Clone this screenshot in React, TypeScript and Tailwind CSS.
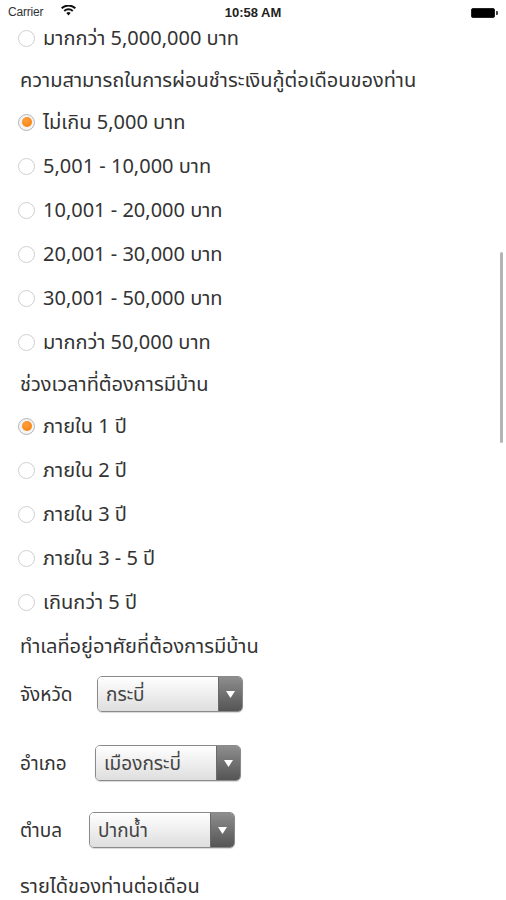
import React from "react";

const font = { fontFamily: '"Noto Sans", "Noto Sans Thai", "Loma", "Garuda", "Liberation Sans", sans-serif' };

function Radio({ checked, label }: { checked?: boolean; label: string }) {
  return (
    <div className="flex h-[44px] items-center pl-[18px]">
      <div
        className={
          "flex h-[17px] w-[17px] shrink-0 items-center justify-center rounded-full border " +
          (checked ? "border-[#b5b5b5] bg-[#f4f4f4]" : "border-[#cfcfcf] bg-white")
        }
      >
        {checked && (
          <div className="h-[10px] w-[10px] rounded-full bg-[radial-gradient(circle_at_40%_35%,#ffa040,#f47a00)]" />
        )}
      </div>
      <span className="ml-[8px] text-[20px] leading-none text-[#333333]">{label}</span>
    </div>
  );
}

function Heading({ text, h }: { text: string; h: string }) {
  return (
    <div className={"flex items-center pl-[20px] text-[20px] leading-none text-[#333333] " + h}>{text}</div>
  );
}

function Select({ label, value, labelW, mt }: { label: string; value: string; labelW: string; mt: string }) {
  return (
    <div className={"flex h-[36px] items-center pl-[20px] " + mt}>
      <div className={"text-[19px] leading-none text-[#333333] " + labelW}>{label}</div>
      <div className="flex h-[36px] w-[146px] overflow-hidden rounded-[5px] border border-[#8a8a8a] shadow-[0_1px_1px_rgba(0,0,0,0.15)]">
        <div className="flex flex-1 items-center bg-gradient-to-b from-white to-[#dedede] pl-[8px] text-[19px] leading-none text-[#444444]">
          {value}
        </div>
        <div className="flex w-[24px] items-center justify-center border-l border-[#6a6a6a] bg-gradient-to-b from-[#8e8e8e] to-[#555555]">
          <svg width="9" height="7" viewBox="0 0 9 7">
            <path d="M0 0 L9 0 L4.5 7 Z" fill="#ffffff" />
          </svg>
        </div>
      </div>
    </div>
  );
}

export default function App() {
  return (
    <div className="relative h-[900px] w-[506px] overflow-hidden bg-white" style={font}>
      {/* status bar */}
      <div className="absolute left-0 top-0 z-10 h-[24px] w-full text-[#222222]">
        <span className="absolute left-[8px] top-[6px] text-[12px] leading-none tracking-[-0.2px] text-[#333]" style={{ fontFamily: '"Liberation Sans", sans-serif' }}>
          Carrier
        </span>
        <svg className="absolute left-[61px] top-[5px]" width="15" height="11" viewBox="0 0 15 11">
          <path d="M7.5 10.5 L5.3 8 A3.2 3.2 0 0 1 9.7 8 Z" fill="#111" />
          <path d="M2.6 5.3 A7 7 0 0 1 12.4 5.3 L11.1 6.7 A5.1 5.1 0 0 0 3.9 6.7 Z" fill="#111" />
          <path d="M0 2.6 A10.8 10.8 0 0 1 15 2.6 L13.7 4 A8.9 8.9 0 0 0 1.3 4 Z" fill="#111" />
        </svg>
        <span className="absolute left-0 top-[6px] w-full text-center text-[13px] font-semibold leading-none" style={{ fontFamily: '"Liberation Sans", sans-serif' }}>
          10:58 AM
        </span>
        <div className="absolute left-[471px] top-[8px] h-[10px] w-[24px] rounded-[2px] border border-[#222] bg-black" />
        <div className="absolute left-[496px] top-[11px] h-[4px] w-[2px] rounded-r-[1px] bg-[#444]" />
      </div>

      {/* scrollbar */}
      <div className="absolute left-[500px] top-[252px] h-[191px] w-[3px] rounded-full bg-[#b4b4b4]" />

      <div className="flex flex-col pt-[16px]">
        <Radio label="มากกว่า 5,000,000 บาท" />
        <Heading text="ความสามารถในการผ่อนชำระเงินกู้ต่อเดือนของท่าน" h="h-[40px]" />
        <Radio checked label="ไม่เกิน 5,000 บาท" />
        <Radio label="5,001 - 10,000 บาท" />
        <Radio label="10,001 - 20,000 บาท" />
        <Radio label="20,001 - 30,000 บาท" />
        <Radio label="30,001 - 50,000 บาท" />
        <Radio label="มากกว่า 50,000 บาท" />
        <Heading text="ช่วงเวลาที่ต้องการมีบ้าน" h="h-[40px]" />
        <Radio checked label="ภายใน 1 ปี" />
        <Radio label="ภายใน 2 ปี" />
        <Radio label="ภายใน 3 ปี" />
        <Radio label="ภายใน 3 - 5 ปี" />
        <Radio label="เกินกว่า 5 ปี" />
        <Heading text="ทำเลที่อยู่อาศัยที่ต้องการมีบ้าน" h="h-[44px]" />
        <Select label="จังหวัด" value="กระบี่" labelW="w-[77px]" mt="mt-[8px]" />
        <Select label="อำเภอ" value="เมืองกระบี่" labelW="w-[75px]" mt="mt-[33px]" />
        <Select label="ตำบล" value="ปากน้ำ" labelW="w-[69px]" mt="mt-[31px]" />
        <Heading text="รายได้ของท่านต่อเดือน" h="h-[40px] mt-[18px]" />
      </div>
    </div>
  );
}
